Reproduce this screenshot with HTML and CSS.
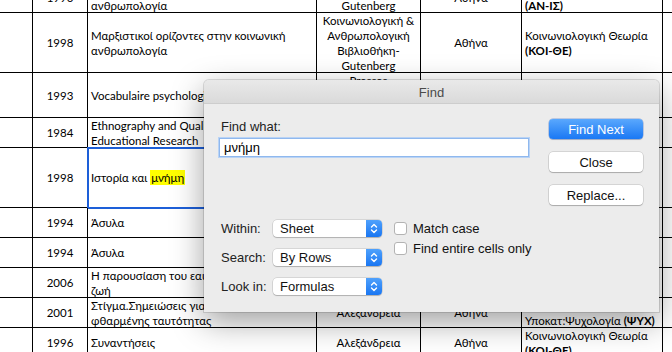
FILE: index.html
```html
<!DOCTYPE html>
<html lang="el">

<head>
    <meta charset="UTF-8" />
    <meta name="viewport" content="width=device-width, initial-scale=1.0" />
    <title>Find</title>
    <link rel="stylesheet" href="styles.css">
</head>

<body>
    <div class="sheet">
        <div class="grid">
            <!-- partial row at the top -->
            <div class="cell"></div>
            <div class="cell center">1990</div>
            <div class="cell"><span>Κοινωνική και πολιτισμική<br>ανθρωπολογία</span></div>
            <div class="cell center"><span>Βιβλιοθήκη-<br>Gutenberg</span></div>
            <div class="cell center">Αθήνα</div>
            <div class="cell"><span>Κοινωνική Ανθρωπολογία<br><b>(ΑΝ-ΙΣ)</b></span></div>
            <div class="cell"></div>

            <div class="cell"></div>
            <div class="cell center">1998</div>
            <div class="cell"><span>Μαρξιστικοί ορίζοντες στην κοινωνική<br>ανθρωπολογία</span></div>
            <div class="cell center"><span>Κοινωνιολογική &amp;<br>Ανθρωπολογική<br>Βιβλιοθήκη-<br>Gutenberg</span></div>
            <div class="cell center">Αθήνα</div>
            <div class="cell"><span>Κοινωνιολογική Θεωρία<br><b>(ΚΟΙ-ΘΕ)</b></span></div>
            <div class="cell"></div>

            <div class="cell"></div>
            <div class="cell center">1993</div>
            <div class="cell">Vocabulaire psychologique</div>
            <div class="cell center"><span>Presses<br>Universitaires<br>de France</span></div>
            <div class="cell"></div>
            <div class="cell"></div>
            <div class="cell"></div>

            <div class="cell"></div>
            <div class="cell center">1984</div>
            <div class="cell"><span>Ethnography and Qualitative Design in<br>Educational Research</span></div>
            <div class="cell"></div>
            <div class="cell"></div>
            <div class="cell"></div>
            <div class="cell"></div>

            <div class="cell"></div>
            <div class="cell center">1998</div>
            <div class="cell selected"><span>Ιστορία και <span class="hit">μνήμη</span></span></div>
            <div class="cell"></div>
            <div class="cell"></div>
            <div class="cell"></div>
            <div class="cell"></div>

            <div class="cell"></div>
            <div class="cell center">1994</div>
            <div class="cell">Άσυλα</div>
            <div class="cell"></div>
            <div class="cell"></div>
            <div class="cell"></div>
            <div class="cell"></div>

            <div class="cell"></div>
            <div class="cell center">1994</div>
            <div class="cell">Άσυλα</div>
            <div class="cell"></div>
            <div class="cell"></div>
            <div class="cell"></div>
            <div class="cell"></div>

            <div class="cell"></div>
            <div class="cell center">2006</div>
            <div class="cell"><span>Η παρουσίαση του εαυτού στην καθημερινή<br>ζωή</span></div>
            <div class="cell"></div>
            <div class="cell"></div>
            <div class="cell"></div>
            <div class="cell"></div>

            <div class="cell"></div>
            <div class="cell center">2001</div>
            <div class="cell"><span>Στίγμα.Σημειώσεις για τη διαχείριση της<br>φθαρμένης ταυτότητας</span></div>
            <div class="cell center">Αλεξάνδρεια</div>
            <div class="cell center">Αθήνα</div>
            <div class="cell"><span>Κοινωνιολογική Θεωρία<br>Υποκατ:Ψυχολογία <b>(ΨΥΧ)</b></span></div>
            <div class="cell"></div>

            <div class="cell"></div>
            <div class="cell center">1996</div>
            <div class="cell">Συναντήσεις</div>
            <div class="cell center">Αλεξάνδρεια</div>
            <div class="cell center">Αθήνα</div>
            <div class="cell"><span>Κοινωνιολογική Θεωρία<br><b>(ΚΟΙ-ΘΕ)</b></span></div>
            <div class="cell"></div>
        </div>
    </div>

    <!-- Find dialog floats over the sheet -->
    <div class="find-dialog">
        <div class="titlebar">Find</div>
        <div class="dialog-body">
            <div class="dialog-main">
                <label class="field-label" for="find_what">Find what:</label>
                <input class="find-input" type="text" id="find_what" value="μνήμη" />

                <div class="options">
                    <div class="selects">
                        <span class="opt-label">Within:</span>
                        <div class="popup">
                            <span>Sheet</span>
                            <span class="arrows"><svg width="8" height="11" viewBox="0 0 8 11"><path d="M1.5 4 L4 1.5 L6.5 4 M1.5 7 L4 9.5 L6.5 7" fill="none" stroke="#fff" stroke-width="1.4" stroke-linecap="round" stroke-linejoin="round"/></svg></span>
                        </div>
                        <span class="opt-label">Search:</span>
                        <div class="popup">
                            <span>By Rows</span>
                            <span class="arrows"><svg width="8" height="11" viewBox="0 0 8 11"><path d="M1.5 4 L4 1.5 L6.5 4 M1.5 7 L4 9.5 L6.5 7" fill="none" stroke="#fff" stroke-width="1.4" stroke-linecap="round" stroke-linejoin="round"/></svg></span>
                        </div>
                        <span class="opt-label">Look in:</span>
                        <div class="popup">
                            <span>Formulas</span>
                            <span class="arrows"><svg width="8" height="11" viewBox="0 0 8 11"><path d="M1.5 4 L4 1.5 L6.5 4 M1.5 7 L4 9.5 L6.5 7" fill="none" stroke="#fff" stroke-width="1.4" stroke-linecap="round" stroke-linejoin="round"/></svg></span>
                        </div>
                    </div>
                    <div class="checks">
                        <label class="check"><span class="box"></span>Match case</label>
                        <label class="check"><span class="box"></span>Find entire cells only</label>
                    </div>
                </div>
            </div>
            <div class="buttons">
                <button class="btn primary">Find Next</button>
                <button class="btn">Close</button>
                <button class="btn">Replace...</button>
            </div>
        </div>
    </div>
</body>

</html>
```

FILE: styles.css
```css
body {
    margin: 0;
    background: #fff;
}

.sheet {
    height: 352px;
    overflow: hidden;
}

/* spreadsheet grid: every cell draws its own right + bottom line */
.grid {
    display: grid;
    grid-template-columns: 33px 55px 229px 104px 101px 141px 60px;
    grid-template-rows: 30px 60px 45px 30px 60px 30px 30px 30px 30px 30px;
    margin-top: -17px;
    font-family: Lato, "Liberation Sans", sans-serif;
    font-size: 11.5px;
    line-height: 15px;
    color: #000;
}

.cell {
    display: flex;
    align-items: center;
    box-sizing: border-box;
    border-right: 1px solid #000;
    border-bottom: 1px solid #000;
    padding: 0 3px;
    white-space: nowrap;
    overflow: hidden;
}

.cell.center {
    justify-content: center;
    text-align: center;
}

.cell.selected {
    outline: 2px solid #1d5fd8;
    outline-offset: -1px;
    overflow: visible;
}

.hit {
    background: #ffff00;
    padding: 1px 1px;
}

/* find dialog */
.find-dialog {
    position: absolute;
    left: 204px;
    top: 80px;
    width: 455px;
    height: 232px;
    background: #ececec;
    border-radius: 5px 5px 0 0;
    box-shadow: 0 10px 32px rgba(0, 0, 0, 0.38), 0 0 0 1px rgba(0, 0, 0, 0.12);
    font-family: "Liberation Sans", Arial, sans-serif;
    font-size: 13px;
    color: #222;
    overflow: hidden;
}

.titlebar {
    height: 23px;
    line-height: 25px;
    text-align: center;
    color: #4a4a4a;
    background: linear-gradient(#e9e9e9, #dadada);
    border-bottom: 1px solid #cdcdcd;
    border-radius: 5px 5px 0 0;
}

.dialog-body {
    display: flex;
    padding: 15px 16px 0 17px;
}

.dialog-main {
    display: flex;
    flex-direction: column;
    width: 312px;
}

.field-label {
    line-height: 16px;
}

.find-input {
    margin: 3px 0 0 -2px;
    width: 310px;
    height: 19px;
    box-sizing: border-box;
    border: 1px solid #8fb8ee;
    box-shadow: 0 0 0 1px #b9d3f5;
    padding: 0 4px;
    font-family: "Liberation Sans", Arial, sans-serif;
    font-size: 13px;
    color: #000;
    background: #fff;
    outline: none;
}

.options {
    display: flex;
    margin-top: 63px;
}

.selects {
    display: grid;
    grid-template-columns: 52px 109px;
    row-gap: 12px;
    align-items: center;
}

.popup {
    display: flex;
    align-items: center;
    justify-content: space-between;
    height: 17px;
    background: #fff;
    border-radius: 4px;
    box-shadow: 0 0 0 0.5px rgba(0, 0, 0, 0.18), 0 1px 1px rgba(0, 0, 0, 0.18);
    padding-left: 7px;
    color: #111;
}

.arrows {
    display: flex;
    align-items: center;
    justify-content: center;
    width: 16px;
    height: 17px;
    border-radius: 0 4px 4px 0;
    background: linear-gradient(#4fa1fc, #1a76f2);
}

.checks {
    display: flex;
    flex-direction: column;
    gap: 4px;
    margin-left: 12px;
}

.check {
    display: flex;
    align-items: center;
    height: 16px;
    color: #111;
}

.check .box {
    width: 11px;
    height: 11px;
    background: #fff;
    border: 1px solid #b3b3b3;
    border-radius: 3px;
    margin-right: 6px;
}

.buttons {
    display: flex;
    flex-direction: column;
    gap: 13px;
    margin-left: auto;
}

.btn {
    width: 94px;
    height: 20px;
    padding: 0;
    border: none;
    border-radius: 4px;
    background: #fff;
    box-shadow: 0 0 0 0.5px rgba(0, 0, 0, 0.2), 0 1px 1px rgba(0, 0, 0, 0.2);
    font-family: "Liberation Sans", Arial, sans-serif;
    font-size: 13px;
    color: #111;
}

.btn.primary {
    color: #fff;
    background: linear-gradient(#5aa8fd, #1a78f4);
    box-shadow: 0 0 0 0.5px rgba(0, 60, 180, 0.4), 0 1px 1px rgba(0, 0, 0, 0.15);
}
```
